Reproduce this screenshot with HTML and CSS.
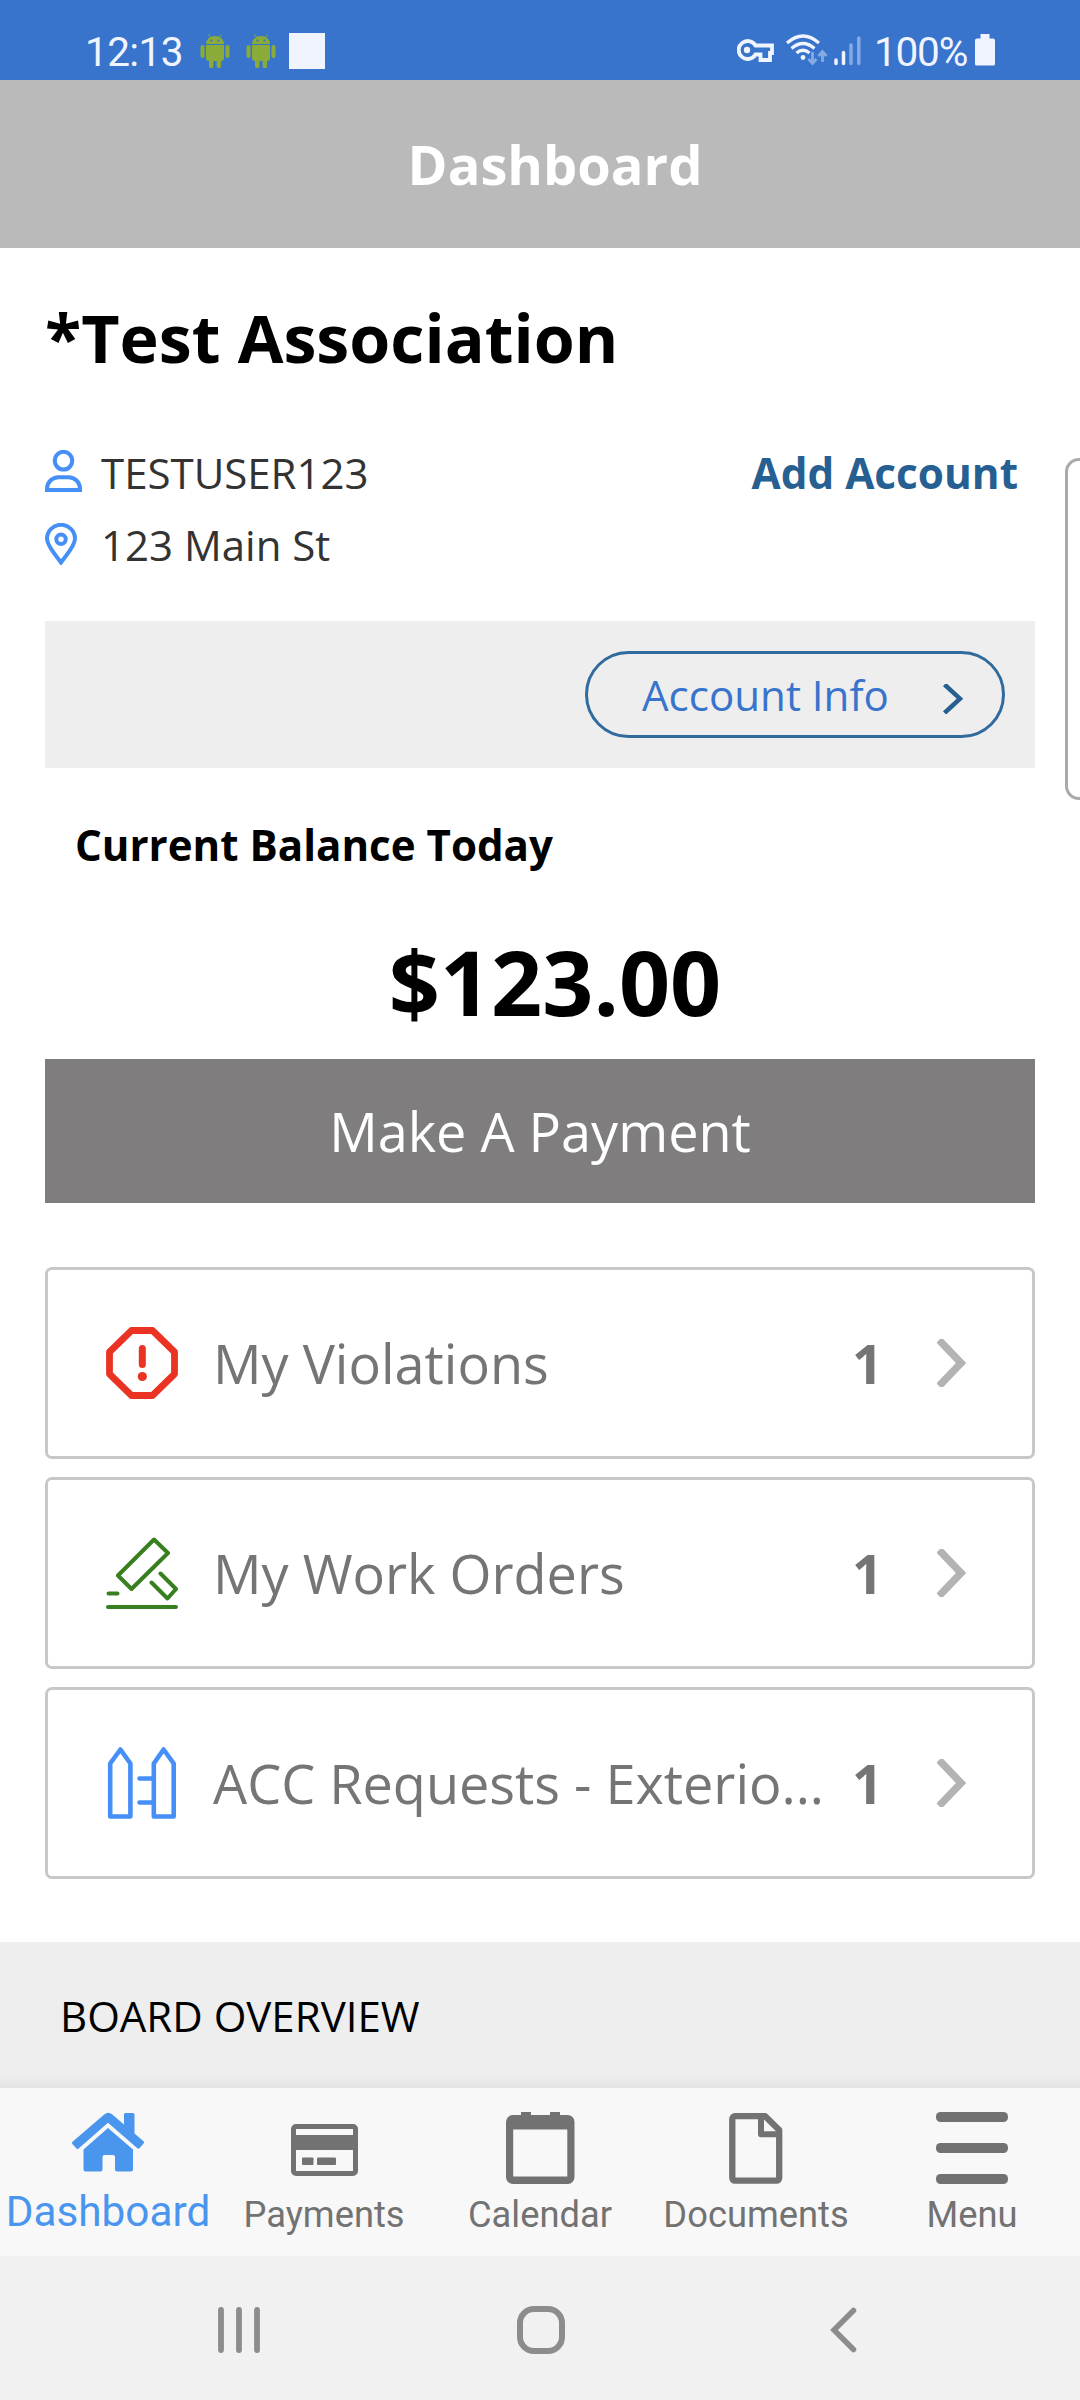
FILE: index.html
```html
<!DOCTYPE html>
<html lang="en">

<head>
    <meta charset="UTF-8">
    <meta name="viewport" content="width=device-width, initial-scale=1.0">
    <title>Dashboard</title>

    <link rel="stylesheet" href="styles.css">
</head>

<body>
    <div class="screen">
        <!-- status bar -->
        <div class="status-bar">
            <span class="clock">12:13</span>
            <svg class="droid" width="30" height="34" viewBox="0 0 30 34" fill="#8aab37">
                <path d="M6 10a9 8 0 0 1 18 0z" />
                <path d="M8.5 0.500l3 4M21.500 0.500l-3 4" stroke="#8aab37" stroke-width="1" />
                <path d="M6 11h18v13a3 3 0 0 1-3 3h0v5a2.200 2.200 0 0 1-4.400 0v-5h-3.200v5a2.200 2.200 0 0 1-4.400 0v-5a3 3 0 0 1-3-3z" />
                <rect x="0.500" y="11" width="4" height="13" rx="2" />
                <rect x="25.500" y="11" width="4" height="13" rx="2" />
                <circle cx="11.500" cy="6.500" r="1.100" fill="#3873cc" />
                <circle cx="18.500" cy="6.500" r="1.100" fill="#3873cc" />
            </svg>
            <svg class="droid" width="30" height="34" viewBox="0 0 30 34" fill="#8aab37">
                <path d="M6 10a9 8 0 0 1 18 0z" />
                <path d="M8.5 0.500l3 4M21.500 0.500l-3 4" stroke="#8aab37" stroke-width="1" />
                <path d="M6 11h18v13a3 3 0 0 1-3 3h0v5a2.200 2.200 0 0 1-4.400 0v-5h-3.200v5a2.200 2.200 0 0 1-4.400 0v-5a3 3 0 0 1-3-3z" />
                <rect x="0.500" y="11" width="4" height="13" rx="2" />
                <rect x="25.500" y="11" width="4" height="13" rx="2" />
                <circle cx="11.500" cy="6.500" r="1.100" fill="#3873cc" />
                <circle cx="18.500" cy="6.500" r="1.100" fill="#3873cc" />
            </svg>
            <span class="notice"></span>
            <div class="status-right">
                <svg width="128" height="36" viewBox="0 0 128 36" fill="none" stroke="#f0f4fe">
                    <!-- vpn key -->
                    <path d="M18.500 11.500H35V19H33V26H23.500V20.500H18.500A9 9 0 1 1 18.500 11.500Z" stroke-width="3.800" />
                    <circle cx="10" cy="16" r="3.200" fill="#f0f4fe" stroke="none" />
                    <!-- wifi -->
                    <path d="M50 9Q66 -5 82 9M54.500 14.500Q66 4.500 77.500 14.500M59.500 19Q66 13.500 72.500 19" stroke-width="3.200" />
                    <circle cx="66" cy="23.500" r="2.400" fill="#f0f4fe" stroke="none" />
                    <path d="M75.500 18v11M71.500 25l4 4.500 4-4.500M85.500 28V18M81.500 22l4-4.500 4 4.500" stroke="#86aae3" stroke-width="2.800" />
                    <!-- signal -->
                    <path d="M99 26v3.500M106.500 18.500v11" stroke-width="3.500" stroke-linecap="round" />
                    <path d="M114 11v18.500M121.800 4v25.500" stroke="#86aae3" stroke-width="3.500" stroke-linecap="round" />
                </svg>
                <span class="percent">100%</span>
                <svg class="battery" width="20" height="32" viewBox="0 0 20 32" fill="#f0f4fe">
                    <path d="M5.500 0h9v4.500H18a2 2 0 0 1 2 2V30a1.500 1.500 0 0 1-1.500 1.500H1.500A1.500 1.500 0 0 1 0 30V6.500a2 2 0 0 1 2-2h3.500z" />
                </svg>
            </div>
        </div>

        <div class="header">Dashboard</div>

        <div class="content">
            <h1 class="title">*Test Association</h1>

            <div class="row">
                <span class="row-icon">
                    <svg width="37" height="42" viewBox="0 0 37 42" fill="none" stroke="#468ff7" stroke-width="4">
                        <ellipse cx="18.500" cy="10.700" rx="8.700" ry="8.900" />
                        <path d="M2 40v-1.500a11.500 11.500 0 0 1 11.500-11.300h10a11.500 11.500 0 0 1 11.500 11.300v1.500z" />
                    </svg>
                </span>
                <span class="row-text">TESTUSER123</span>
                <a class="add-account">Add Account</a>
            </div>
            <div class="row">
                <span class="row-icon">
                    <svg width="32" height="42" viewBox="0 0 32 42" fill="none" stroke="#468ff7" stroke-width="4">
                        <path d="M16 39.500C11 32.500 2 23 2 15.800a14 14 0 0 1 28 0C30 23 21 32.500 16 39.500z" />
                        <circle cx="16" cy="16.200" r="4.700" />
                    </svg>
                </span>
                <span class="row-text">123 Main St</span>
            </div>

            <div class="info-bar">
                <div class="pill">
                    <span>Account Info</span>
                    <svg width="20" height="30" viewBox="0 0 20 30" fill="none" stroke="#265f90" stroke-width="4.500">
                        <path d="M1.500 0.500L17 14.700 1.500 29" />
                    </svg>
                </div>
            </div>

            <div class="balance-label">Current Balance Today</div>
            <div class="balance">$123.00</div>
            <div class="pay-button">Make A Payment</div>

            <div class="cards">
                <div class="card">
                    <svg class="card-icon" viewBox="0 0 72 72" fill="none" stroke="#ea3323" stroke-linejoin="round" stroke-linecap="round">
                        <path d="M25.500 3.500h21L68.500 25v22L46.500 68.500h-21L3.500 47V25z" stroke-width="6.800" />
                        <path d="M36.300 21.500v16" stroke-width="7" />
                        <circle cx="36.300" cy="49.500" r="4.600" fill="#ea3323" stroke="none" />
                    </svg>
                    <span class="card-name">My Violations</span>
                    <span class="card-count">1</span>
                    <svg class="chevron" viewBox="0 0 29 48">
                        <path d="M2 1l22 23L2 47" />
                    </svg>
                </div>
                <div class="card">
                    <svg class="card-icon" viewBox="0 0 72 72" fill="none" stroke="#38801f" stroke-width="4" stroke-linejoin="round" stroke-linecap="round">
                        <path d="M48 2.500L62 16 25.500 52 12 38.500z" />
                        <path d="M54.500 36.500L70 52 61.500 61.500 45.500 45.500" />
                        <path d="M2.500 56.500h9M2 70h68" />
                    </svg>
                    <span class="card-name">My Work Orders</span>
                    <span class="card-count">1</span>
                    <svg class="chevron" viewBox="0 0 29 48">
                        <path d="M2 1l22 23L2 47" />
                    </svg>
                </div>
                <div class="card">
                    <svg class="card-icon" viewBox="0 0 72 72" fill="none" stroke="#468ff7" stroke-width="4.600" stroke-linejoin="round" stroke-linecap="round">
                        <path d="M4.200 69.500V16.500L14.400 2.500 24.400 16.500V69.500z" />
                        <path d="M47.800 69.500V16.500L57.600 2.500 67.700 16.500V69.500z" />
                        <path d="M33.500 31.500h14M33.500 55.500h14" />
                    </svg>
                    <span class="card-name">ACC Requests - Exterio...</span>
                    <span class="card-count">1</span>
                    <svg class="chevron" viewBox="0 0 29 48">
                        <path d="M2 1l22 23L2 47" />
                    </svg>
                </div>
            </div>
        </div>

        <div class="board">BOARD OVERVIEW</div>

        <!-- bottom tabs -->
        <div class="tabs">
            <div class="tab active">
                <svg width="72" height="72" viewBox="0 0 72 72" fill="#4a95ed">
                    <path d="M36 16L61 37.500V57.500a2 2 0 0 1-2 2H45a2 2 0 0 1-2-2V45a2 2 0 0 0-2-2h-8.500a2 2 0 0 0-2 2v12.500a2 2 0 0 1-2 2h-15a2 2 0 0 1-2-2V37.500z" />
                    <path d="M4.500 36.500L0.800 32.500a2 2 0 0 1 0-3L32.500 2.200a6 6 0 0 1 7.500 0L52 12.500V2.500A1.500 1.500 0 0 1 53.500 1h7.500a1.500 1.500 0 0 1 1.500 1.500V21.500L71.200 29a2 2 0 0 1 0 3L67.700 36a1.800 1.800 0 0 1-2.600 0L36 10.800 7.200 36a1.800 1.800 0 0 1-2.700 .5z" />
                </svg>
                <span>Dashboard</span>
            </div>
            <div class="tab">
                <svg width="72" height="72" viewBox="0 0 72 72" fill="#727272">
                    <rect x="5.500" y="14.500" width="62" height="47" rx="2.500" fill="none" stroke="#727272" stroke-width="5" />
                    <rect x="5" y="23" width="63" height="15" />
                    <rect x="14" y="45.500" width="11.500" height="7.500" rx="1" />
                    <rect x="29" y="45.500" width="19" height="7.500" rx="1" />
                </svg>
                <span>Payments</span>
            </div>
            <div class="tab">
                <svg width="72" height="72" viewBox="0 0 72 72" fill="#727272">
                    <path fill-rule="evenodd" d="M8.500 3H17V0h10v3h19V0h10v3h7a7 7 0 0 1 7.500 7v55a7 7 0 0 1-7.500 7H9a7 7 0 0 1-7-7V10a7 7 0 0 1 6.500-7zM9.200 17.500V64.500H63.300V17.500z" />
                </svg>
                <span>Calendar</span>
            </div>
            <div class="tab">
                <svg width="72" height="72" viewBox="0 0 72 72" fill="none" stroke="#727272" stroke-width="6.300" stroke-linejoin="round">
                    <path d="M15.200 4.200h30L59.200 18v48a2.700 2.700 0 0 1-2.700 2.700H15a2.700 2.700 0 0 1-2.700-2.700V7a2.700 2.700 0 0 1 2.900-2.800z" />
                    <path d="M41 4v18.200h18.500" stroke-width="6" />
                </svg>
                <span>Documents</span>
            </div>
            <div class="tab">
                <svg width="72" height="72" viewBox="0 0 72 72" fill="#727272">
                    <rect width="72" height="10" rx="4.500" />
                    <rect y="31" width="72" height="10" rx="4.500" />
                    <rect y="62" width="72" height="10" rx="4.500" />
                </svg>
                <span>Menu</span>
            </div>
        </div>

        <!-- system navigation -->
        <div class="nav-bar">
            <svg width="42" height="46" viewBox="0 0 42 46" stroke="#8c8c8c" stroke-width="5.800" stroke-linecap="round">
                <path d="M3 3v40M21 3v40M39 3v40" />
            </svg>
            <svg class="home" width="48" height="48" viewBox="0 0 48 48" fill="none" stroke="#8c8c8c" stroke-width="6">
                <rect x="3" y="3" width="42" height="42" rx="14" />
            </svg>
            <svg width="27" height="46" viewBox="0 0 27 46" fill="none" stroke="#8c8c8c" stroke-width="5.500" stroke-linecap="round">
                <path d="M23.500 3.500L4 23l19.500 19.500" />
            </svg>
        </div>

        <div class="side-tab"></div>
    </div>
</body>

</html>
```

FILE: styles.css
```css
* {
    box-sizing: border-box;
}

body {
    margin: 0;
    background: #fff;
    font-family: "Open Sans", "Noto Sans", sans-serif;
    color: #000;
}

svg {
    display: block;
    flex: none;
}

.screen {
    position: relative;
    width: 1080px;
    height: 2400px;
    overflow: hidden;
    display: flex;
    flex-direction: column;
}

/* status bar */

.status-bar {
    height: 80px;
    padding: 0 85px 0 85px;
    background: #3873cc;
    color: #f0f4fe;
    font-family: Roboto, sans-serif;
    font-size: 40.500px;
    line-height: 105px;
    display: flex;
}

.clock {
    width: 115px;
    letter-spacing: -0.600px;
}

.droid {
    margin: 34px 16px 0 0;
}

.notice {
    width: 36px;
    height: 36px;
    margin: 33px 0 0 -3px;
    background: #f0f4fe;
}

.status-right {
    margin-left: auto;
    display: flex;
}

.status-right svg {
    margin-top: 34px;
}

.percent {
    width: 101px;
    margin-left: 9px;
    letter-spacing: -1.200px;
    white-space: nowrap;
}

.header {
    height: 168px;
    padding-left: 30px;
    background: #bababa;
    color: #fff;
    font-size: 54.200px;
    font-weight: bold;
    line-height: 169px;
    text-align: center;
}

.content {
    padding: 45px 45px 63px;
}

.title {
    margin: 0 0 54px;
    font-size: 66.300px;
    line-height: 89px;
}

.row {
    height: 72.500px;
    display: flex;
    align-items: center;
    font-size: 42px;
    line-height: 72px;
    color: #333;
}

.row-icon {
    width: 56px;
    padding-bottom: 2px;
}

.add-account {
    margin-left: auto;
    margin-right: 17px;
    color: #265f92;
    font-size: 42.300px;
    font-weight: bold;
}

.row-text,
.add-account {
    padding-top: 1px;
}

.info-bar {
    height: 147px;
    margin-top: 40px;
    padding: 30px;
    background: #eee;
    display: flex;
    justify-content: flex-end;
}

.pill {
    width: 420px;
    height: 87px;
    padding: 0 39px 0 54px;
    border: 3px solid #316a9c;
    border-radius: 44px;
    display: flex;
    justify-content: space-between;
    color: #3873cc;
    font-size: 42.100px;
    line-height: 82px;
}

.pill svg {
    margin-top: 30px;
}

.balance-label {
    margin: 47px 0 0 30px;
    font-size: 42.100px;
    font-weight: bold;
    line-height: 60px;
}

.balance {
    margin: 56px 0 28px 30px;
    font-size: 89.500px;
    font-weight: bold;
    line-height: 100px;
    text-align: center;
}

.pay-button {
    height: 144px;
    background: #7f7d7e;
    color: #fff;
    font-size: 54px;
    line-height: 144px;
    text-align: center;
}

/* cards */

.cards {
    margin-top: 64px;
    display: flex;
    flex-direction: column;
    gap: 18px;
}

.card {
    height: 192px;
    padding: 0 66px 0 58px;
    border: 3px solid #c8c8c9;
    border-radius: 7px;
    display: flex;
    align-items: center;
    color: #757575;
    font-size: 54px;
    line-height: 186px;
}

.card-icon {
    width: 72px;
    height: 72px;
    margin-right: 35px;
}

.card-name {
    flex: 1;
    white-space: nowrap;
}

.card-count {
    margin-right: 54px;
    font-weight: bold;
}

.chevron {
    width: 29px;
    height: 48px;
    fill: none;
    stroke: #b3b3b3;
    stroke-width: 7.500;
}

.board {
    height: 146px;
    padding-left: 60px;
    background: linear-gradient(transparent 132px, #e4e4e4 146px), #eee;
    font-size: 42px;
    line-height: 148px;
}

/* bottom tabs */

.tabs {
    height: 168px;
    background: #f8f8f8;
    display: flex;
}

.tab {
    flex: 1 0 216px;
    padding-top: 24px;
    display: flex;
    flex-direction: column;
    align-items: center;
    color: #727272;
    font-family: Roboto, sans-serif;
    font-size: 36.300px;
    line-height: 61px;
}

.tab.active {
    color: #4a95ed;
    font-size: 42.300px;
    line-height: 56px;
}

.nav-bar {
    height: 144px;
    padding: 4px 223px 0 218px;
    background: #f1f1f1;
    display: flex;
    align-items: center;
    justify-content: space-between;
}

.home {
    margin-right: 8px;
}

/* drawer handle peeking in from the right edge */

.side-tab {
    position: absolute;
    top: 458px;
    right: -20px;
    width: 35px;
    height: 342px;
    background: #fff;
    border: 3px solid #aaa;
    border-radius: 14px;
}
```
